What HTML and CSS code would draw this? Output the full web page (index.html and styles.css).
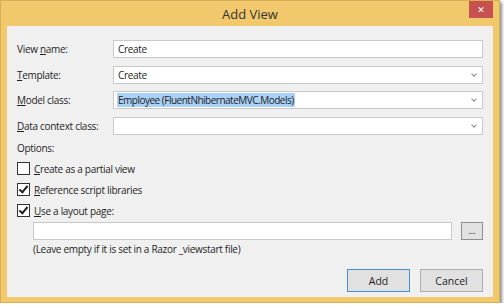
FILE: index.html
```html
<!DOCTYPE html>
<html lang="en">
<head>
  <meta charset="UTF-8">
  <title>Add View</title>
  <link rel="stylesheet" href="styles.css">
</head>
<body>
  <div class="window">
    <!-- Title bar -->
    <div class="titlebar">
      <span></span>
      <span class="title">Add View</span>
      <button class="close">&#x2715;</button>
    </div>

    <div class="content">
      <div class="field">
        <label>View <u>n</u>ame:</label>
        <div class="box">Create</div>
      </div>
      <div class="field">
        <label><u>T</u>emplate:</label>
        <div class="box combo">Create<span class="arrow"></span></div>
      </div>
      <div class="field">
        <label><u>M</u>odel class:</label>
        <div class="box combo"><span class="selected">Employee (FluentNhibernateMVC.Models)</span><span class="arrow"></span></div>
      </div>
      <div class="field">
        <label><u>D</u>ata context class:</label>
        <div class="box combo"><span class="arrow"></span></div>
      </div>

      <div class="options-label">Options:</div>
      <div class="check"><span class="tick"></span><u>C</u>reate as a partial view</div>
      <div class="check"><span class="tick on"></span><u>R</u>eference script libraries</div>
      <div class="check"><span class="tick on"></span><u>U</u>se a layout page:</div>

      <div class="layout-row">
        <div class="box wide"></div>
        <button class="browse">...</button>
      </div>
      <div class="note">(Leave empty if it is set in a Razor _viewstart file)</div>

      <div class="actions">
        <button class="btn default">Add</button>
        <button class="btn">Cancel</button>
      </div>
    </div>
  </div>
</body>
</html>
```

FILE: styles.css
```css
body {
  margin: 0;
  background: #ffffff;
  font-family: 'Open Sans', sans-serif;
  font-size: 10px;
  letter-spacing: -0.3px;
  color: #1e1e1e;
}

.window {
  width: 498px;
  height: 301px;
  background: #f1c96c;
  border: 1px solid #d9ae55;
  box-shadow: 2px 2px 3px rgba(0, 0, 0, 0.45);
  display: flex;
  flex-direction: column;
}

.titlebar {
  height: 25px;
  display: grid;
  grid-template-columns: 1fr auto 1fr;
}

.title {
  font-size: 13px;
  letter-spacing: 0;
  color: #333;
  line-height: 26px;
}

.close {
  justify-self: end;
  width: 24px;
  height: 17px;
  margin-right: 6px;
  padding: 0;
  border: none;
  background: #c75050;
  color: #fff;
  font-size: 9px;
  font-weight: bold;
  font-family: 'DejaVu Sans', sans-serif;
}

.content {
  flex: 1;
  margin: 0 6px 5px 6px;
  background: #f0f0f0;
  padding: 14px 10px 0 10px;
  display: flex;
  flex-direction: column;
}

.field {
  display: flex;
  align-items: center;
  flex-shrink: 0;
  margin-bottom: 7.6px;
}

.field label {
  width: 96px;
}

.box {
  flex: 1;
  height: 16px;
  border: 1px solid #c9c9c9;
  background: #fff;
  padding: 0 4px;
  display: flex;
  align-items: center;
  line-height: 16px;
}

.combo {
  justify-content: space-between;
}

.selected {
  background: #a9d0f5;
  padding: 0 1px;
  margin-left: -1px;
  line-height: 14px;
  letter-spacing: -0.5px;
}

.arrow {
  width: 3px;
  height: 3px;
  border-right: 1px solid #8a8a8a;
  border-bottom: 1px solid #8a8a8a;
  transform: rotate(45deg);
  margin: 0 2px 0 auto;
  position: relative;
  top: -1px;
}

.options-label {
  margin-top: -2px;
  height: 18px;
  line-height: 17px;
  flex-shrink: 0;
}

.check {
  display: flex;
  align-items: center;
  height: 21px;
  flex-shrink: 0;
}

.tick {
  width: 11px;
  height: 11px;
  border: 1px solid #333;
  background: #fff;
  margin-right: 4px;
  position: relative;
}

.tick.on::after {
  content: '';
  position: absolute;
  left: 3px;
  top: 0px;
  width: 3px;
  height: 7px;
  border-right: 2px solid #222;
  border-bottom: 2px solid #222;
  transform: rotate(40deg);
}

.layout-row {
  display: flex;
  align-items: center;
  margin-left: 16px;
  margin-top: 1px;
  flex-shrink: 0;
}

.wide {
  flex: 1;
}

.browse {
  width: 22px;
  height: 18px;
  margin-left: 9px;
  padding: 0;
  border: 1px solid #8f8f8f;
  background: #e1e1e1;
  font-size: 9px;
  line-height: 10px;
  font-family: 'Open Sans', sans-serif;
}

.note {
  margin-left: 16px;
  margin-top: 2px;
}

.actions {
  display: flex;
  justify-content: flex-end;
  gap: 10px;
  margin-top: auto;
  margin-bottom: 5px;
}

.btn {
  width: 63px;
  height: 23px;
  border: 1px solid #adadad;
  background: #e1e1e1;
  font-family: 'Open Sans', sans-serif;
  font-size: 10.5px;
  color: #1e1e1e;
  padding: 0;
}

.btn.default {
  border-color: #4a90d0;
}
```
